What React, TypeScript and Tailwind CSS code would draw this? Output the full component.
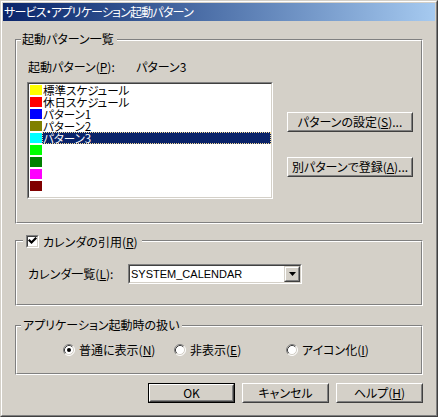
import React from 'react'

interface PatternItem {
    name: string
    color: string
    selected?: boolean
}

const patterns: PatternItem[] = [
    { name: '標準スケジュール', color: '#FFFF00' },
    { name: '休日スケジュール', color: '#FF0000' },
    { name: 'パターン1', color: '#0000FF' },
    { name: 'パターン2', color: '#808000' },
    { name: 'パターン3', color: '#00FFFF', selected: true },
    { name: '', color: '#00FF00' },
    { name: '', color: '#008000' },
    { name: '', color: '#FF00FF' },
    { name: '', color: '#800000' },
]

// classic etched frame with the caption sitting on the top line
const GroupBox: React.FC<{ legend: React.ReactNode; legendClass: string; className: string; children?: React.ReactNode }> = ({
    legend,
    legendClass,
    className,
    children,
}) => (
    <div className={`relative border border-t-[#808080] border-l-[#808080] border-b-white border-r-white ${className}`}>
        <div className="h-full border border-t-white border-l-white border-b-[#808080] border-r-[#808080]">{children}</div>
        <div className={`absolute flex items-center bg-[#D4D0C8] ${legendClass}`}>{legend}</div>
    </div>
)

const Button: React.FC<{ className: string; isDefault?: boolean; children: React.ReactNode }> = ({ className, isDefault, children }) => (
    <div className={`${isDefault ? 'border border-black' : ''} ${className}`}>
        <div className="h-full border border-t-white border-l-white border-b-[#404040] border-r-[#404040]">
            <div className="h-full flex items-center justify-center border border-t-[#D4D0C8] border-l-[#D4D0C8] border-b-[#808080] border-r-[#808080] leading-[12px]">
                {children}
            </div>
        </div>
    </div>
)

const Key: React.FC<{ k: string }> = ({ k }) => (
    <>
        (<span className="underline underline-offset-1">{k}</span>)
    </>
)

const Radio: React.FC<{ checked?: boolean }> = ({ checked }) => (
    <svg width="12" height="12" viewBox="0 0 12 12" className="shrink-0">
        <circle cx="6" cy="6" r="5" fill="#fff" />
        <path d="M2.11 9.89 A5.5 5.5 0 0 1 9.89 2.11" fill="none" stroke="#808080" />
        <path d="M2.82 9.18 A4.5 4.5 0 0 1 9.18 2.82" fill="none" stroke="#404040" />
        <path d="M9.89 2.11 A5.5 5.5 0 0 1 2.11 9.89" fill="none" stroke="#fff" />
        <path d="M9.18 2.82 A4.5 4.5 0 0 1 2.82 9.18" fill="none" stroke="#D4D0C8" />
        {checked && <circle cx="6" cy="6" r="2" fill="#000" />}
    </svg>
)

const CheckBox: React.FC = () => (
    <div className="w-[13px] h-[13px] shrink-0 border border-t-[#808080] border-l-[#808080] border-b-white border-r-white">
        <div className="h-full border border-t-[#404040] border-l-[#404040] border-b-[#D4D0C8] border-r-[#D4D0C8] bg-white">
            <svg width="9" height="9" viewBox="0 0 9 9">
                <polyline points="1.5,3.5 3.5,5.5 7.5,1.5" fill="none" stroke="#000" strokeWidth="2.2" strokeLinecap="square" />
            </svg>
        </div>
    </div>
)

const App: React.FC = () => {
    return (
        <div className="w-[438px] h-[417px] font-['Noto_Sans_CJK_JP',sans-serif] [font-feature-settings:'palt'] text-[12px] text-black bg-[#D4D0C8] border border-t-[#D4D0C8] border-l-[#D4D0C8] border-b-[#404040] border-r-[#404040]">
            <div className="h-full p-px border border-t-white border-l-white border-b-[#808080] border-r-[#808080]">
                {/* Title bar */}
                <div className="h-[18px] flex items-center pl-px bg-gradient-to-r from-[#0A246A] to-[#A6CAF0] text-white leading-[12px] tracking-[-0.8px]">
                    サービス・アプリケーション起動パターン
                </div>

                <div className="px-3 flex flex-col">
                    {/* Pattern list */}
                    <GroupBox
                        className="mt-[18px] h-[185px]"
                        legendClass="-top-[9px] left-[5px] h-[16px] pl-px pr-[3px]"
                        legend="起動パターン一覧"
                    >
                        <div className="flex pt-[18px] pl-[10px]">
                            <div className="flex flex-col">
                                <div className="h-[16px] flex items-center ml-px">
                                    <span className="w-[108px]">
                                        起動パターン<Key k="P" />:
                                    </span>
                                    <span>パターン3</span>
                                </div>
                                <div className="mt-[7px] w-[246px] h-[117px] border border-t-[#808080] border-l-[#808080] border-b-white border-r-white">
                                    <div className="h-full border border-t-[#404040] border-l-[#404040] border-b-[#D4D0C8] border-r-[#D4D0C8] bg-white pl-px">
                                        {patterns.map((p, i) => (
                                            <div key={i} className="flex h-[12px]">
                                                <div className="w-[12px] h-[10px] mt-px shrink-0" style={{ backgroundColor: p.color }} />
                                                <div
                                                    className={`flex-1 pl-px text-[11.5px] leading-[12px] whitespace-nowrap ${
                                                        p.selected
                                                            ? 'bg-[#0A246A] text-white outline outline-1 outline-dotted -outline-offset-1 outline-[#F5DB95]'
                                                            : ''
                                                    }`}
                                                >
                                                    {p.name}
                                                </div>
                                            </div>
                                        ))}
                                    </div>
                                </div>
                            </div>
                            <div className="ml-[14px] mt-[53px] flex flex-col gap-[25px]">
                                <Button className="w-[126px] h-[20px]">
                                    パターンの設定<Key k="S" />...
                                </Button>
                                <Button className="w-[126px] h-[20px]">
                                    別パターンで登録<Key k="A" />...
                                </Button>
                            </div>
                        </div>
                    </GroupBox>

                    {/* Calendar */}
                    <GroupBox
                        className="mt-[16px] h-[66px]"
                        legendClass="-top-[6px] left-[7px] h-[13px] pl-[3px] pr-[4px] gap-[4px]"
                        legend={
                            <>
                                <CheckBox />
                                <span className="leading-[12px]">
                                    カレンダの引用<Key k="R" />
                                </span>
                            </>
                        }
                    >
                        <div className="flex items-center pt-[22px] pl-[11px]">
                            <span className="w-[100px] leading-[12px]">
                                カレンダ一覧<Key k="L" />:
                            </span>
                            <div className="w-[174px] h-[20px] border border-t-[#808080] border-l-[#808080] border-b-white border-r-white">
                                <div className="h-full flex border border-t-[#404040] border-l-[#404040] border-b-[#D4D0C8] border-r-[#D4D0C8] bg-white">
                                    <span className="flex-1 pl-[1px] font-['Liberation_Sans',sans-serif] text-[11px] leading-[16px]">SYSTEM_CALENDAR</span>
                                    <div className="w-[16px] h-[16px] border border-t-[#D4D0C8] border-l-[#D4D0C8] border-b-[#404040] border-r-[#404040]">
                                        <div className="h-full flex items-center justify-center bg-[#D4D0C8] border border-t-white border-l-white border-b-[#808080] border-r-[#808080]">
                                            <svg width="7" height="4" viewBox="0 0 7 4">
                                                <polygon points="0,0 7,0 3.5,4" fill="#000" />
                                            </svg>
                                        </div>
                                    </div>
                                </div>
                            </div>
                        </div>
                    </GroupBox>

                    {/* Startup handling */}
                    <GroupBox
                        className="mt-[19px] h-[50px]"
                        legendClass="-top-[9px] left-[5px] h-[16px] pl-[2px] pr-[3px]"
                        legend="アプリケーション起動時の扱い"
                    >
                        <div className="flex pt-[17px] pl-[46px] leading-[12px]">
                            <div className="w-[111px] flex items-center gap-[4px]">
                                <Radio checked />
                                <span>
                                    普通に表示<Key k="N" />
                                </span>
                            </div>
                            <div className="w-[112px] flex items-center gap-[4px]">
                                <Radio />
                                <span>
                                    非表示<Key k="E" />
                                </span>
                            </div>
                            <div className="flex items-center gap-[4px]">
                                <Radio />
                                <span>
                                    アイコン化<Key k="I" />
                                </span>
                            </div>
                        </div>
                    </GroupBox>

                    {/* Dialog buttons */}
                    <div className="mt-[8px] flex justify-end gap-[7px]">
                        <Button className="w-[87px] h-[20px]" isDefault>
                            OK
                        </Button>
                        <Button className="w-[87px] h-[20px]">キャンセル</Button>
                        <Button className="w-[87px] h-[20px]">
                            ヘルプ<Key k="H" />
                        </Button>
                    </div>
                </div>
            </div>
        </div>
    )
}

export default App
